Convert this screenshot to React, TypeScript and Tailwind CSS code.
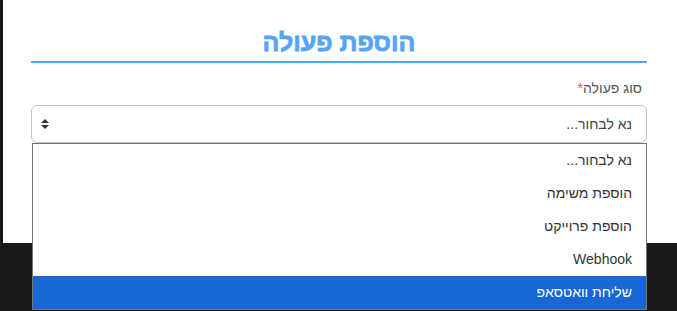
import React from "react";

const options = ["נא לבחור...", "הוספת משימה", "הוספת פרוייקט", "Webhook", "שליחת וואטסאפ"];

export default function App() {
  return (
    <div
      className="relative w-[677px] h-[311px] overflow-hidden bg-[#181a18]"
      style={{ fontFamily: '"Liberation Sans", Arial, sans-serif' }}
      dir="rtl"
    >
      <div className="ml-[1px] w-[674px] h-[243px] bg-white pl-[28px] pr-[30px] pt-[26px]" dir="rtl">
        <h1 className="text-center text-[25px] leading-[32px] font-bold text-[#55a5f5] [-webkit-text-stroke:0.8px_#55a5f5] border-b-2 border-[#55a5f5] pb-[3px]">
          הוספת פעולה
        </h1>
        <div className="mt-[15px] mb-[7px] h-[20px] text-[14px] leading-[20px] text-[#555] pr-[5px]">
          סוג פעולה<span className="text-[#e8467b]">*</span>
        </div>
        <div className="flex items-center justify-between h-[38px] border border-[#c4c4c4] rounded-[6px] pr-[14px] pl-[8px] text-[14px] text-[#444]">
          <span>נא לבחור...</span>
          <svg width="10" height="12" viewBox="0 0 10 12">
            <path d="M5 1 L9 5 L1 5 Z" fill="#333" />
            <path d="M5 11 L9 7 L1 7 Z" fill="#333" />
          </svg>
        </div>
      </div>
      <div className="absolute left-[32px] top-[143px] w-[615px] h-[167px] border border-[#767676] bg-white flex flex-col">
        {options.map((o, i) => (
          <div
            key={i}
            className={
              i === options.length - 1
                ? "h-[33px] flex items-center pr-[14px] text-[14px] bg-[#1967d2] text-white"
                : "h-[33px] flex items-center pr-[14px] text-[14px] text-[#333]"
            }
          >
            {o}
          </div>
        ))}
      </div>
    </div>
  );
}
